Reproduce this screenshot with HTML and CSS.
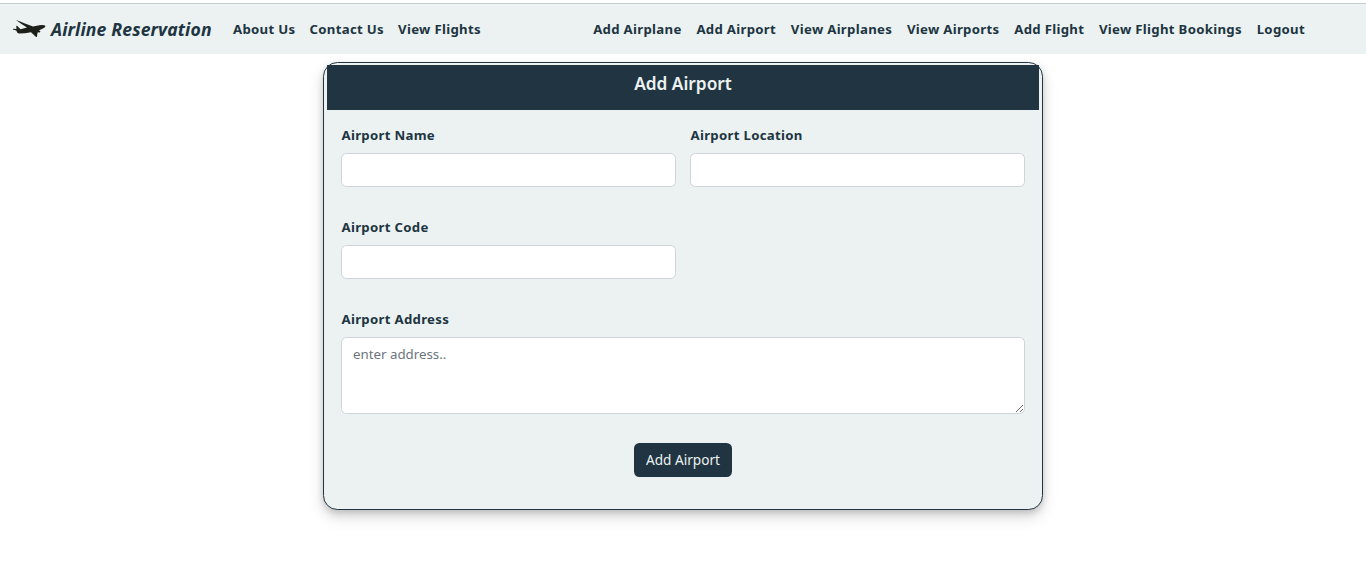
FILE: index.html
```html
<!DOCTYPE html>
<html lang="en">
<head>
<meta charset="utf-8">
<title>Airline Reservation</title>
<link rel="stylesheet" href="styles.css">
</head>
<body>
<nav class="navbar">
  <a class="brand">
    <svg class="plane" viewBox="0 0 34 18" width="34" height="18"><path d="M4 .1 L7.5 1.2 L13 3.4 L21 6.4 L27.5 5.2 Q32 4.5 33.6 6 Q33.4 7.6 30 9 L27 10.2 L28.5 11.5 L27.8 12.6 L25.8 12.3 L25.2 14.5 L25 17 L23.8 16.8 L19 12.2 L13 13.2 L7 13.6 L5.3 12.8 L4.3 10.6 L.8 9.4 L1.2 8.8 L4.5 9.1 L4.2 5.7 L5.3 6.1 L8.5 9.2 L15 7.6 L9.5 4 Z"/></svg>
    <span class="brand-name">Airline Reservation</span>
  </a>
  <ul class="links">
    <li>About Us</li><li>Contact Us</li><li>View Flights</li>
  </ul>
  <ul class="links links-end">
    <li>Add Airplane</li><li>Add Airport</li><li>View Airplanes</li><li>View Airports</li><li>Add Flight</li><li>View Flight Bookings</li><li>Logout</li>
  </ul>
</nav>
<main class="page">
  <section class="card">
    <h5 class="card-header">Add Airport</h5>
    <form class="form">
      <div class="field"><label for="name">Airport Name</label><input id="name" type="text"></div>
      <div class="field"><label for="location">Airport Location</label><input id="location" type="text"></div>
      <div class="field"><label for="code">Airport Code</label><input id="code" type="text"></div>
      <div class="field wide"><label for="address">Airport Address</label><textarea id="address" placeholder="enter address.."></textarea></div>
      <button class="submit" type="button">Add Airport</button>
    </form>
  </section>
</main>
</body>
</html>
```
FILE: styles.css
```css
* { box-sizing: border-box; }
body { margin: 0; padding-top: 3px; height: 586px; overflow: hidden; background: #fff; color: #203541; font: 13.4px/21.6px "Noto Sans", "Open Sans", sans-serif; }
.navbar { display: flex; align-items: center; height: 51px; padding: 1px 61px 0 12px; background: #ecf2f2; border-top: 1px solid #c5cccc; }
.brand { display: flex; align-items: center; width: 221px; gap: 5px; }
.plane { margin-bottom: 2px; fill: #1d1f1b; }
.brand-name { font-size: 17.6px; font-weight: 700; font-style: italic; letter-spacing: .12px; white-space: nowrap; }
.links { display: flex; gap: 14.1px; margin: 0; padding: 0; list-style: none; font-size: 13.2px; font-weight: 700; letter-spacing: .3px; white-space: nowrap; }
.links-end { gap: 14.8px; margin-left: auto; }
.page { display: flex; justify-content: center; padding-top: 8px; }
.card { width: 720px; height: 448px; padding: 2px 3px; background: #ecf2f2; border: 1px solid #203541; border-radius: 14.4px; box-shadow: 0 7px 14.4px rgba(0, 0, 0, .15), 0 3px 6px rgba(0, 0, 0, .15); }
.card-header { height: 45px; margin: 0; padding-top: 8px; background: #203541; color: #ecf2f2; font-size: 17.3px; font-weight: 600; line-height: 22px; text-align: center; }
.form { display: grid; grid-template-columns: 335px 335px; column-gap: 14px; padding: 14px 14px 0; }
.field { height: 92px; }
.field label { display: block; height: 29px; padding: 1px 0 0 .5px; font-size: 13.2px; font-weight: 700; letter-spacing: .3px; }
.field input, .field textarea { display: block; width: 100%; height: 34px; margin: 0; padding: 6.4px 11px 5px; background: #fff; border: 1px solid #ced4da; border-radius: 5.4px; font: inherit; outline: none; }
.wide { grid-column: 1 / -1; height: 135px; }
.field textarea { height: 77px; resize: vertical; font-size: 13.3px; }
.field textarea::placeholder { color: #6c757d; }
.submit { grid-column: 1 / -1; justify-self: center; width: 98px; height: 34px; padding: 0; background: #203541; color: #ecf2f2; border: 0; border-radius: 5.4px; font: inherit; font-size: 13.6px; }
```
